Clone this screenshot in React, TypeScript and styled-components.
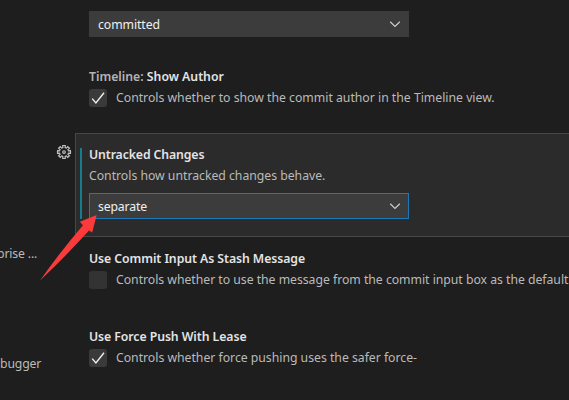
import React from "react";
import styled, { createGlobalStyle } from "styled-components";

const GlobalStyle = createGlobalStyle`
  *, *::before, *::after { box-sizing: border-box; }
  html, body { margin: 0; overflow: hidden; background: #1e1e1e; }
`;

const Page = styled.main`
  position: relative;
  display: grid;
  grid-template-columns: 56px 19px 494px;
  width: 569px;
  height: 400px;
  overflow: hidden;
  background: #1e1e1e;
  color: #bababa;
  font: 12.25px/20px "Noto Sans", "Open Sans", sans-serif;
  white-space: nowrap;
`;

const Outline = styled.nav`
  display: flex;
  flex-direction: column;
  gap: 90px;
  padding-top: 244px;
`;

const Category = styled.span<{ $spacing: number; $indent?: number }>`
  height: 20px;
  margin-left: ${(p) => p.$indent ?? 0}px;
  letter-spacing: ${(p) => p.$spacing}px;
`;

const Gutter = styled.div`
  padding-top: 144px;
`;

const GearButton = styled.button`
  display: block;
  width: 16px;
  height: 16px;
  padding: 0;
  border: 0;
  background: none;
  color: #c5c5c5;
  svg { display: block; }
`;

const Settings = styled.div`
  display: flex;
  flex-direction: column;
  min-width: 0;
  padding-top: 11px;
`;

const Setting = styled.section<{ $height: number; $top?: number }>`
  flex: none;
  height: ${(p) => p.$height}px;
  padding: ${(p) => p.$top ?? 0}px 0 0 14px;
`;

const FocusedSetting = styled.section`
  flex: none;
  height: 104px;
  padding: 14px 0 0 4px;
  border: 1px solid #474747;
  border-right: 0;
  background: #2b2b2b;
`;

const Modified = styled.div`
  height: 71px;
  padding-left: 7px;
  border-left: 2px solid #167c8e;
`;

const Title = styled.h3<{ $spacing: number }>`
  height: 14px;
  margin: 0;
  color: #e4e4e4;
  font-size: 12.25px;
  font-weight: 600;
  line-height: 14px;
  letter-spacing: ${(p) => p.$spacing}px;
`;

const Scope = styled.span`
  color: #b4b4b4;
`;

const Description = styled.span<{ $spacing: number }>`
  letter-spacing: ${(p) => p.$spacing}px;
`;

const HelpText = styled.p`
  height: 27px;
  margin: 4px 0 0;
`;

const CheckRow = styled.label`
  display: flex;
  align-items: center;
  gap: 9px;
  height: 22px;
  margin-top: 3px;
`;

const CheckBox = styled.span<{ $checked?: boolean }>`
  display: block;
  flex: none;
  width: 18px;
  height: 18px;
  border-radius: 3px;
  background: ${(p) => (p.$checked ? "#3a3a3a" : "#333333")};
  color: #f0f0f0;
  svg { display: block; }
`;

const SelectBox = styled.div<{ $focused?: boolean }>`
  display: flex;
  align-items: center;
  justify-content: space-between;
  width: 320px;
  height: 26px;
  padding: 0 7px 0 8px;
  border: 1px solid ${(p) => (p.$focused ? "#1b79b9" : "#3c3c3c")};
  background: #3c3c3c;
  color: #f0f0f0;
`;

const SelectValue = styled(Description)`
  padding-top: 1px;
`;

const Pointer = styled.svg`
  position: absolute;
  left: 0;
  top: 0;
  pointer-events: none;
`;

function Check({ checked }: { checked?: boolean }) {
  return (
    <CheckBox $checked={checked}>
      {checked && (
        <svg width="18" height="18" viewBox="0 0 18 18" fill="none" stroke="currentColor" strokeWidth="1.4">
          <path d="M3.2 9.6 6.9 14 15 3.8" />
        </svg>
      )}
    </CheckBox>
  );
}

function Select({ value, spacing, focused }: { value: string; spacing: number; focused?: boolean }) {
  return (
    <SelectBox $focused={focused}>
      <SelectValue $spacing={spacing}>{value}</SelectValue>
      <svg width="12" height="12" viewBox="0 0 12 12" fill="none" stroke="#cccccc" strokeWidth="1.2">
        <path d="M1.2 3.7 6 8.4 10.8 3.7" />
      </svg>
    </SelectBox>
  );
}

function Gear() {
  const teeth = Array.from({ length: 8 }, (_, i) => {
    const at = (r: number, deg: number) => {
      const a = ((i * 45 + deg) * Math.PI) / 180;
      return `${(8 + r * Math.cos(a)).toFixed(2)} ${(8 + r * Math.sin(a)).toFixed(2)}`;
    };
    return `${at(4.6, -14)} L${at(6.6, -11)} L${at(6.6, 11)} L${at(4.6, 14)}`;
  });
  return (
    <svg width="16" height="16" viewBox="0 0 16 16" fill="none" stroke="currentColor" strokeWidth="1.15">
      <path d={`M${teeth.join(" L")}Z`} />
      <circle cx="8" cy="8" r="1.3" />
    </svg>
  );
}

export default function App() {
  return (
    <>
      <GlobalStyle />
      <Page>
        <Outline>
          <Category $spacing={-0.15} $indent={-3}>prise ...</Category>
          <Category $spacing={-0.15}>bugger</Category>
        </Outline>
        <Gutter>
          <GearButton aria-label="More actions">
            <Gear />
          </GearButton>
        </Gutter>
        <Settings>
          <Setting $height={59}>
            <Select value="committed" spacing={-0.08} />
          </Setting>
          <Setting $height={63}>
            <Title $spacing={0}>
              <Scope>Timeline: </Scope>Show Author
            </Title>
            <CheckRow>
              <Check checked />
              <Description $spacing={-0.01}>
                Controls whether to show the commit author in the Timeline view.
              </Description>
            </CheckRow>
          </Setting>
          <FocusedSetting>
            <Modified>
              <Title $spacing={-0.1}>Untracked Changes</Title>
              <HelpText>
                <Description $spacing={-0.02}>Controls how untracked changes behave.</Description>
              </HelpText>
              <Select value="separate" spacing={-0.15} focused />
            </Modified>
          </FocusedSetting>
          <Setting $height={93} $top={15}>
            <Title $spacing={-0.06}>Use Commit Input As Stash Message</Title>
            <CheckRow>
              <Check />
              <Description $spacing={-0.03}>
                Controls whether to use the message from the commit input box as the default
              </Description>
            </CheckRow>
          </Setting>
          <Setting $height={60}>
            <Title $spacing={-0.06}>Use Force Push With Lease</Title>
            <CheckRow>
              <Check checked />
              <Description $spacing={-0.02}>Controls whether force pushing uses the safer force-</Description>
            </CheckRow>
          </Setting>
        </Settings>
        <Pointer width="110" height="290" viewBox="0 0 110 290">
          <path
            d="M96.7 215 79.8 221.8 83 225.2 Q60 252 39.8 280.8 Q66 256 89 230.6 L92.2 232.6Z"
            fill="#fb3b3b"
          />
        </Pointer>
      </Page>
    </>
  );
}
